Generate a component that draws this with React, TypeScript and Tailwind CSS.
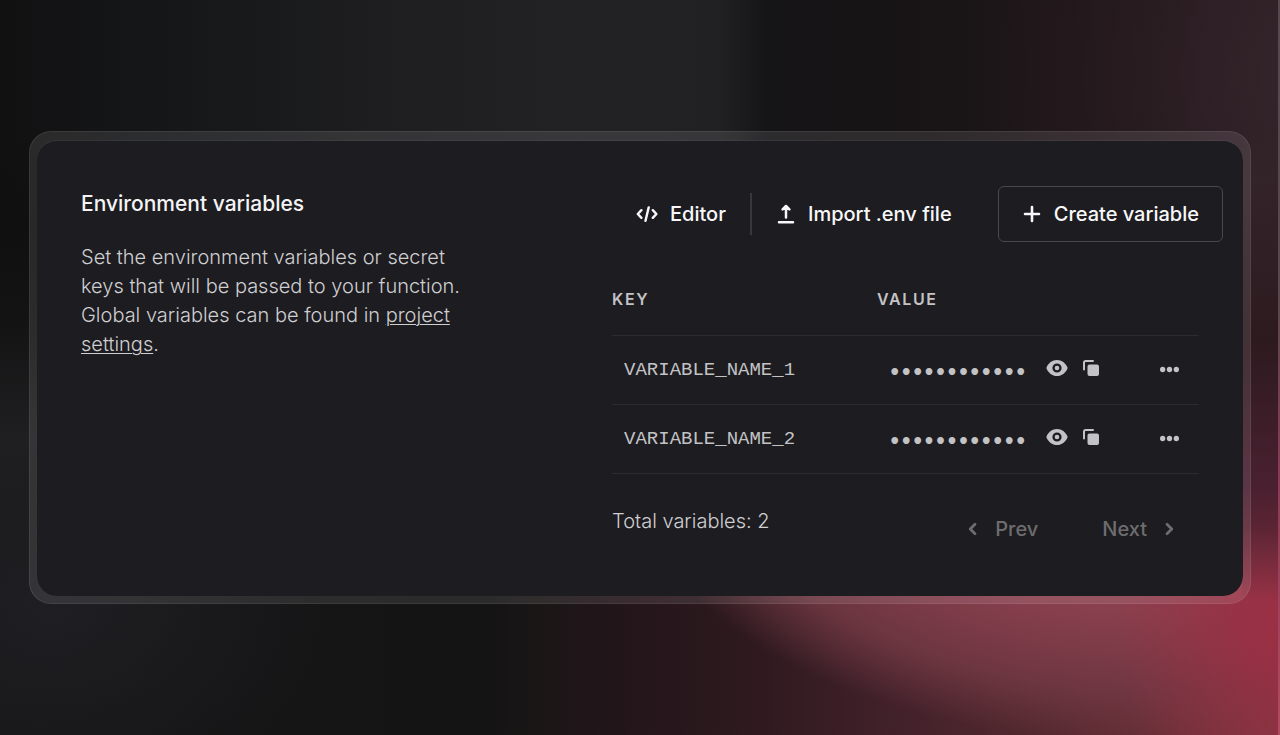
import type { ReactNode } from "react";

type IconProps = { className?: string };

function CodeIcon({ className }: IconProps) {
  return (
    <svg viewBox="0 0 22 22" className={className} fill="none" stroke="currentColor" strokeWidth="2.4" strokeLinecap="round" strokeLinejoin="round" aria-hidden="true">
      <path d="M5.400 7.200 1.800 11l3.600 3.800M16.800 7.200l3.600 3.800-3.600 3.800M12.700 4.400 9.500 17.800" />
    </svg>
  );
}

function UploadIcon({ className }: IconProps) {
  return (
    <svg viewBox="0 0 20 20" className={className} fill="none" stroke="currentColor" strokeWidth="2.500" strokeLinecap="round" strokeLinejoin="round" aria-hidden="true">
      <path d="M10 13.500V3M6.600 5.400 10 2l3.400 3.400M3 18.200h14" />
      <path d="M7 5.200 10 2l3 3.200Z" fill="currentColor" strokeWidth="1.500" />
    </svg>
  );
}

function PlusIcon({ className }: IconProps) {
  return (
    <svg viewBox="0 0 20 20" className={className} fill="none" stroke="currentColor" strokeWidth="2.600" strokeLinecap="round" aria-hidden="true">
      <path d="M10 3v14M3 10h14" />
    </svg>
  );
}

function EyeIcon({ className }: IconProps) {
  return (
    <svg viewBox="0 0 22 22" className={className} aria-hidden="true">
      <path fill="currentColor" fillRule="evenodd" d="M11 3C6.200 3 2.300 6.200.6 10.300a1.500 1.500 0 0 0 0 1.400C2.300 15.800 6.200 19 11 19s8.700-3.200 10.400-7.300a1.500 1.500 0 0 0 0-1.400C19.700 6.200 15.800 3 11 3Zm0 3.400a4.600 4.600 0 1 1 0 9.200 4.600 4.600 0 0 1 0-9.200Z" />
      <circle cx="11" cy="11" r="2.300" fill="currentColor" />
    </svg>
  );
}

function CopyIcon({ className }: IconProps) {
  return (
    <svg viewBox="0 0 20 20" className={className} aria-hidden="true">
      <path fill="none" stroke="currentColor" strokeWidth="2" strokeLinecap="round" d="M3 11.500V4.500A1.500 1.500 0 0 1 4.500 3H12" />
      <rect x="6.500" y="6.500" width="11.500" height="11.500" rx="2" fill="currentColor" />
    </svg>
  );
}

function DotsIcon({ className }: IconProps) {
  return (
    <svg viewBox="0 0 20 20" className={className} fill="currentColor" aria-hidden="true">
      <circle cx="2.800" cy="10" r="2.800" />
      <circle cx="10" cy="10" r="2.800" />
      <circle cx="17.200" cy="10" r="2.800" />
    </svg>
  );
}

function ChevronIcon({ className }: IconProps) {
  return (
    <svg viewBox="0 0 20 20" className={className} fill="none" stroke="currentColor" strokeWidth="2.800" strokeLinecap="round" strokeLinejoin="round" aria-hidden="true">
      <path d="m8 5.200 4.800 4.800L8 14.800" />
    </svg>
  );
}

function ToolbarButton({ icon, children, className = "" }: { icon: ReactNode; children: ReactNode; className?: string }) {
  return (
    <button type="button" className={`flex h-14 items-center gap-3 whitespace-nowrap text-[20px] leading-7 font-medium text-[#f8f8fa] ${className}`}>
      {icon}
      {children}
    </button>
  );
}

const variables = ["VARIABLE_NAME_1", "VARIABLE_NAME_2"];

export default function App() {
  return (
    <main className="flex min-h-screen items-center bg-[#151516] px-[29px] py-8 font-['Inter',sans-serif] text-[#c3c3c6] [background-image:linear-gradient(to_bottom,#57474f_0%,#57474f_40%,#8a3a55_65%,#b34a62_100%),linear-gradient(to_bottom,#35262c00_0%,#33242a_10%,#2d1a1f_45%,#4a2030_76%,#5a2433_84%,#8a2f4200_100%),linear-gradient(to_bottom,#11111200_0%,#101011_20%,#131314_40%,#1f1f21_65%,#1f1f2200_100%),radial-gradient(ellipse_14%_26%_at_101%_85%,#9b2f44_0%,#9b2f44d0_30%,#9b2f4460_65%,#9b2f4400_100%),radial-gradient(ellipse_40%_36%_at_90%_65%,#903f4f_0%,#8a404e_50%,#713843e0_80%,#6a334000_100%),radial-gradient(ellipse_22%_28%_at_4%_82%,#1f1f23_0%,#1f1f2300_100%),radial-gradient(ellipse_28%_60%_at_103%_10%,#36262d_0%,#2a1c21a0_60%,#2a1c2100_100%),linear-gradient(to_right,#111112_0%,#17181a_16%,#1e1e20_30%,#222224_45%,#212123_56%,#151416_60%,#171415_70%,#22171b_100%),linear-gradient(to_right,#161617_0%,#141415_38%,#1a1616_42%,#22151a_48%,#2d191e_58%,#42212a_70%,#55292f_82%,#80363f_100%)] [background-position:right_top,right_131px,left_131px,0_0,0_0,0_0,0_0,left_top,left_bottom] [background-size:2px_100%,38px_470px,38px_470px,100%_100%,100%_100%,100%_100%,100%_100%,100%_50%,100%_50%] bg-no-repeat">
      <div className="w-full rounded-[22px] border border-white/8 bg-white/10 p-[7px] pt-2">
        <div className="grid grid-cols-[19fr_21fr] rounded-[20px] border-t border-white/5 bg-[#1d1c20] bg-clip-padding px-11 pt-[45px] pb-[39px]">
          <section>
            <h1 className="pt-1 text-[21px] leading-7 font-medium text-[#f4f4f6]">Environment variables</h1>
            <p className="mt-[25px] max-w-[400px] text-[20px] leading-[29px] font-light text-[#cfcfd2]">
              Set the environment variables or secret keys that will be passed to your function. Global variables can be found in{" "}
              <a href="#settings" className="underline decoration-1 underline-offset-2">project settings</a>.
            </p>
          </section>

          <section>
            <div className="-mr-6 flex items-center">
              <ToolbarButton className="px-6" icon={<CodeIcon className="size-[22px]" />}>Editor</ToolbarButton>
              <div className="h-[42px] w-0.5 bg-[#38383c]" />
              <ToolbarButton className="px-6" icon={<UploadIcon className="size-5" />}>Import .env file</ToolbarButton>
              <ToolbarButton className="ml-auto rounded-md border border-[#48484b] px-[23px]" icon={<PlusIcon className="size-5" />}>Create variable</ToolbarButton>
            </div>

            <table className="mt-5 w-full table-fixed border-collapse text-left">
              <colgroup>
                <col className="w-[265px]" />
                <col />
                <col className="w-[60px]" />
              </colgroup>
              <thead>
                <tr className="h-[73px] border-b border-[#2c2c30] text-[16px] leading-6">
                  <th scope="col" className="font-semibold tracking-widest">KEY</th>
                  <th scope="col" className="font-semibold tracking-widest">VALUE</th>
                  <td />
                </tr>
              </thead>
              <tbody>
                {variables.map((name) => (
                  <tr key={name} className="h-[69px] border-b border-[#2c2c30]">
                    <td className="pl-3 font-['Liberation_Mono',monospace] text-[19px] leading-7">{name}</td>
                    <td className="pl-3">
                      <div className="flex items-center">
                        <span className="pt-1 font-['DejaVu_Sans_Mono',monospace] text-[19px] leading-7 font-bold">••••••••••••</span>
                        <div className="ml-5 flex items-center gap-[13px] pb-[3px]">
                          <button type="button" aria-label={`Show ${name}`}><EyeIcon className="size-[22px]" /></button>
                          <button type="button" aria-label={`Copy ${name}`}><CopyIcon className="size-5" /></button>
                        </div>
                      </div>
                    </td>
                    <td>
                      <button type="button" aria-label={`More options for ${name}`} className="mx-auto block"><DotsIcon className="size-[19px]" /></button>
                    </td>
                  </tr>
                ))}
              </tbody>
            </table>

            <div className="mt-[27px] flex items-start justify-between">
              <p className="pt-1.5 text-[20px] leading-7 font-light text-[#cfcfd2]">Total variables: 2</p>
              <div className="flex gap-4 text-[20px] leading-7 font-medium text-[#6d6d70]">
                <button type="button" className="flex h-14 items-center gap-3 px-6"><ChevronIcon className="size-5 rotate-180" />Prev</button>
                <button type="button" className="flex h-14 items-center gap-3 pr-5 pl-6">Next<ChevronIcon className="size-5" /></button>
              </div>
            </div>
          </section>
        </div>
      </div>
    </main>
  );
}
